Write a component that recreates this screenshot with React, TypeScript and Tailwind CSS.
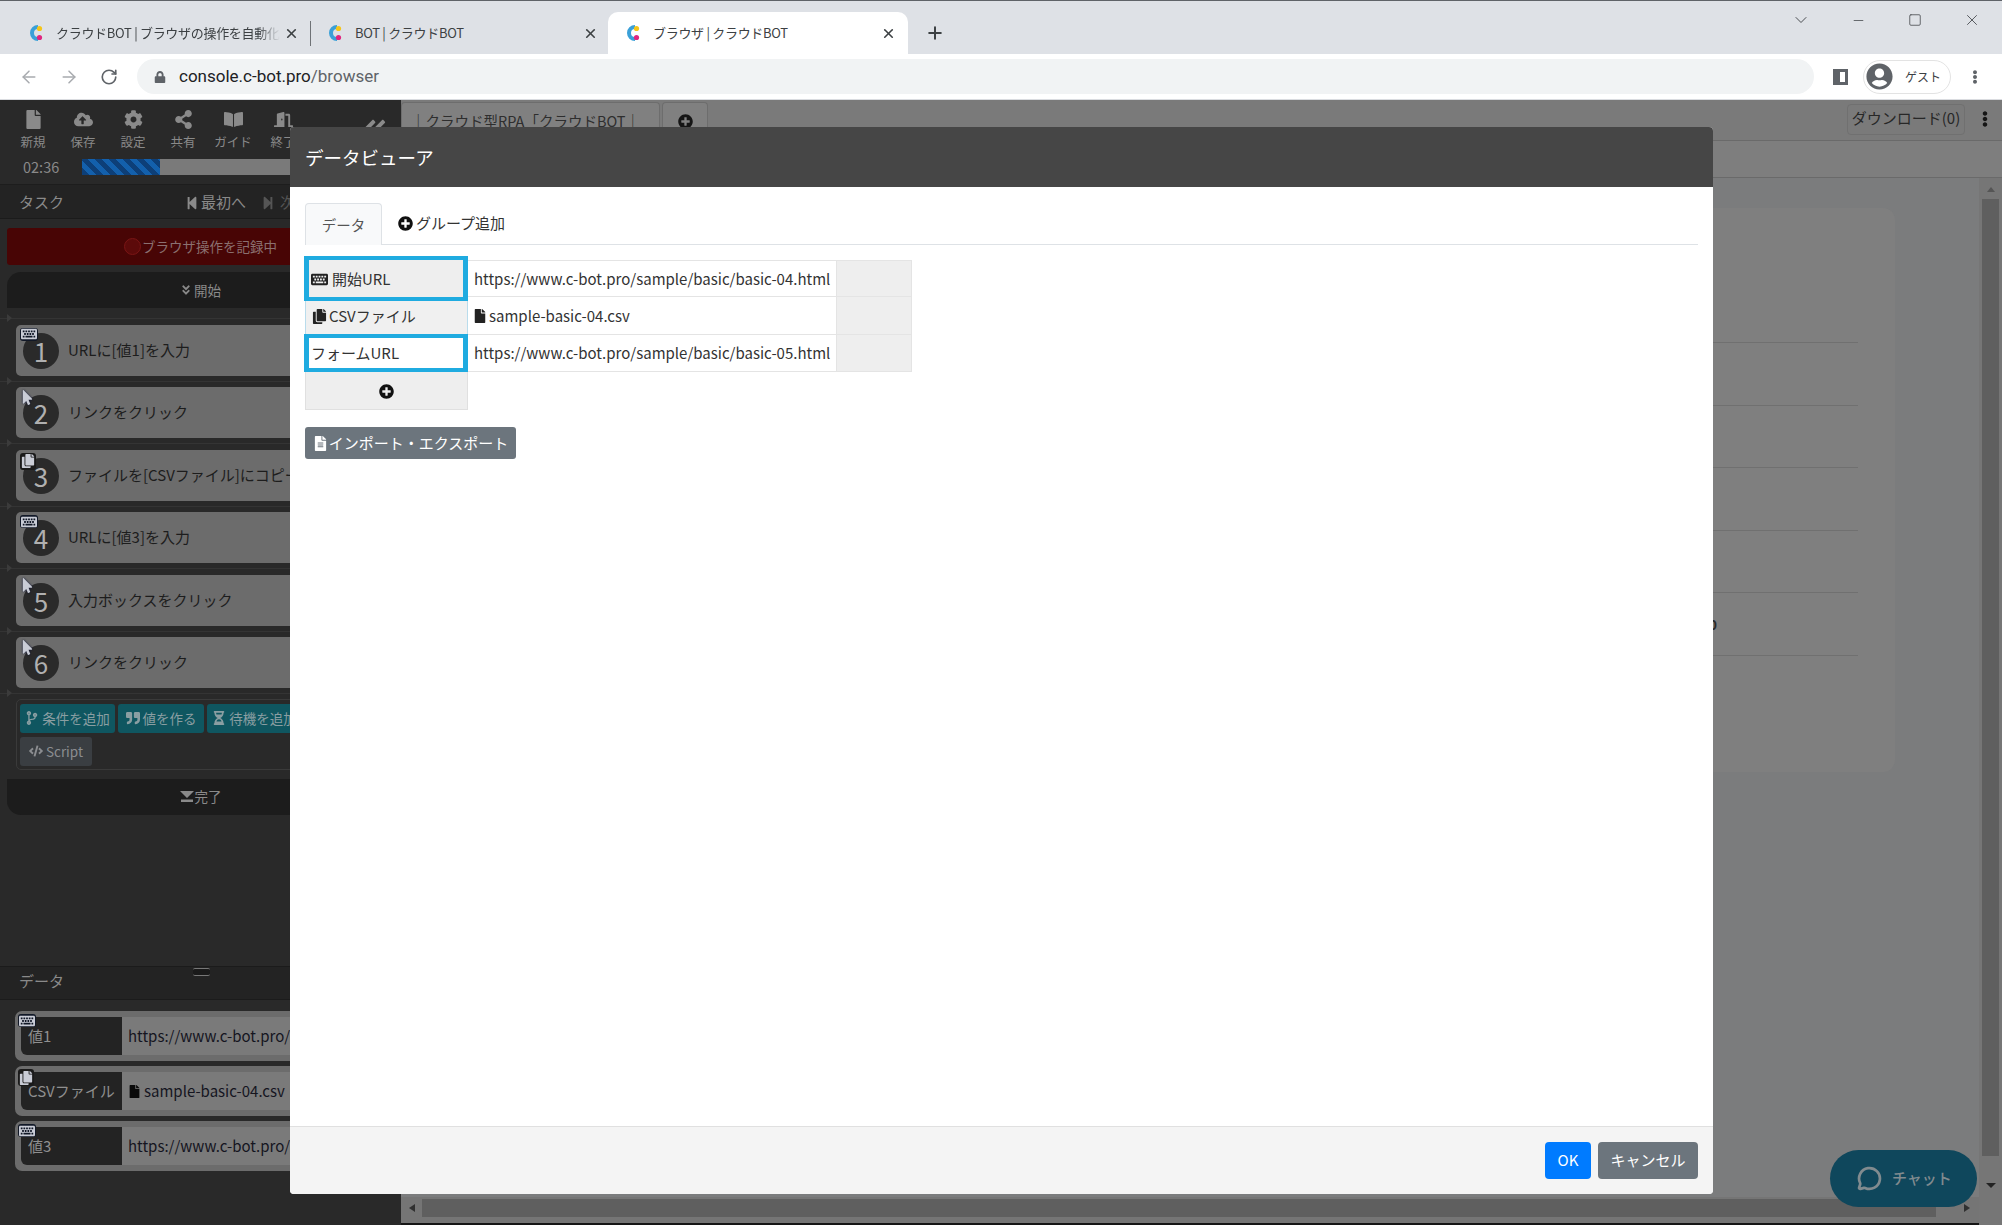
import React from "react";
import {
  FaFile, FaCloudUploadAlt, FaCog, FaShareAlt, FaBookOpen, FaDoorOpen, FaStepBackward, FaStepForward,
  FaAngleDoubleDown, FaAngleDoubleLeft, FaKeyboard, FaMousePointer, FaCopy, FaPlusCircle, FaEllipsisV,
  FaQuoteRight, FaHourglassHalf, FaCode, FaCodeBranch, FaLock, FaUserCircle, FaFileAlt,
} from "react-icons/fa";
import { ArrowLeft, ArrowRight, RotateCw, X, Plus, ChevronDown, Minus, Square, MessageCircle } from "lucide-react";

const FONT = "font-['Noto_Sans_CJK_JP','Noto_Sans',sans-serif]";

function Favicon() {
  return (
    <svg width="14" height="18" viewBox="0 0 14 18" className="shrink-0">
      <path d="M9 1 A8 8 0 0 0 9 17 L9 13 A4 4 0 0 1 9 5 Z" fill="#3aa0d8" />
      <circle cx="10.5" cy="4.5" r="2.6" fill="#f5c518" />
      <circle cx="10.5" cy="13.5" r="2.6" fill="#e0267f" />
    </svg>
  );
}

function ChromeTab({ title, cls, active, fade }: { title: string; cls: string; active?: boolean; fade?: boolean }) {
  return (
    <div className={`${cls} h-[42px] flex items-center shrink-0 relative ${active ? "bg-white rounded-t-[10px]" : ""}`}>
      <Favicon />
      <span className={`ml-[13px] text-[13px] tracking-[-0.3px] text-[#3c4043] whitespace-nowrap overflow-hidden flex-1 ${fade ? "[mask-image:linear-gradient(to_right,black_90%,transparent)]" : ""}`}>{title}</span>
      <X size={15} strokeWidth={2.6} className="text-[#3c4043] shrink-0 ml-1" />
    </div>
  );
}

const toolItems = [
  { icon: FaFile, label: "新規" },
  { icon: FaCloudUploadAlt, label: "保存" },
  { icon: FaCog, label: "設定" },
  { icon: FaShareAlt, label: "共有" },
  { icon: FaBookOpen, label: "ガイド" },
  { icon: FaDoorOpen, label: "終了" },
];

function MiniIcon({ kind, cls }: { kind: string; cls: string }) {
  if (kind === "key")
    return <span className={`absolute ${cls} flex h-[13px] w-[18px] items-center justify-center rounded-[3px] bg-[#111827]`}><FaKeyboard size={16} className="text-[#c9ccd6]" /></span>;
  if (kind === "copy")
    return <span className={`absolute ${cls} flex h-[17px] w-[16px] items-center justify-center rounded-[3px] bg-[#1a1a1a]`}><FaCopy size={14} className="text-[#c9ccd6]" /></span>;
  return <span className={`absolute ${cls}`}><FaMousePointer size={15} className="text-[#c9ccd6] [filter:drop-shadow(0_0_1px_#0b1030)]" /></span>;
}

const steps = [
  { n: 1, t: "URLに[値1]を入力", k: "key" },
  { n: 2, t: "リンクをクリック", k: "mouse" },
  { n: 3, t: "ファイルを[CSVファイル]にコピー", k: "copy" },
  { n: 4, t: "URLに[値3]を入力", k: "key" },
  { n: 5, t: "入力ボックスをクリック", k: "mouse" },
  { n: 6, t: "リンクをクリック", k: "mouse" },
];

function Connector() {
  return (
    <div className="relative h-[11.5px] flex items-center">
      <div className="h-px w-full bg-[#343434]" />
      <div className="absolute left-[7px] top-[1px] h-0 w-0 border-y-[4px] border-l-[5px] border-y-transparent border-l-[#3b3b3b]" />
    </div>
  );
}

function Step({ n, t, k }: { n: number; t: string; k: string }) {
  return (
    <div className="relative ml-[16px] mr-[12px] h-[51px] shrink-0 rounded-[5px] bg-[#6c6c6c] flex items-center">
      <div className="absolute left-[7px] top-[8px] h-[36px] w-[36px] rounded-full bg-[#2a2a2a] flex items-center justify-center text-[26px] text-[#b0b0b0] leading-none">{n}</div>
      <span className="ml-[52px] text-[15px] text-[#1d1d1d] whitespace-nowrap">{t}</span>
      <MiniIcon kind={k} cls="left-[4px] top-[3px]" />
    </div>
  );
}

function SmallButton({ icon: I, label, w, cls }: { icon: any; label: string; w: string; cls: string }) {
  return (
    <div className={`${w} ${cls} h-[29px] rounded-[3px] flex items-center justify-center gap-[3px] text-[13.5px] whitespace-nowrap shrink-0`}>
      <I size={14} />
      <span>{label}</span>
    </div>
  );
}

function DataRow({ label, k, value, file }: { label: string; k: string; value: string; file?: boolean }) {
  return (
    <div className="relative ml-[15px] mr-[12px] h-[50px] rounded-[7px] bg-[#6c6c6c] pl-[6px] pt-[6px] pb-[6px] shrink-0">
      <div className="flex h-[38px] rounded-bl-[6px] overflow-hidden">
        <div className="w-[101px] bg-[#232323] pl-[7px] flex items-center text-[15px] text-[#8f8f8f] whitespace-nowrap">{label}</div>
        <div className="flex-1 bg-[#7a7a7a] pl-[6px] flex items-center gap-[3px] text-[15px] text-[#15151f] whitespace-nowrap overflow-hidden">
          {file && <FaFile size={13} className="text-[#0a0a0a]" />}
          {value}
        </div>
      </div>
      <MiniIcon kind={k} cls="left-[3px] top-[3px]" />
    </div>
  );
}

export default function App() {
  return (
    <div className={`relative w-[2002px] h-[1225px] overflow-hidden bg-[#7b7c7d] flex flex-col ${FONT}`}>
      {/* Tab strip */}
      <div className="h-[54px] shrink-0 bg-[#dee1e6] border-t border-[#5f6368] flex items-end relative">
        <ChromeTab title="クラウドBOT | ブラウザの操作を自動化" cls="w-[310px] pl-[29px] pr-[11px]" fade />
        <div className="w-px h-[25px] bg-[#6f7276] mb-[8px] shrink-0" />
        <ChromeTab title="BOT | クラウドBOT" cls="w-[297px] pl-[17px] pr-[10px]" />
        <ChromeTab title="ブラウザ | クラウドBOT" cls="w-[300px] pl-[18px] pr-[12px]" active />
        <Plus size={20} strokeWidth={2.4} className="ml-[17px] mb-[11px] text-[#3c4043]" />
        <div className="ml-auto flex items-center self-start mt-[9px] text-[#4a4d51]">
          <ChevronDown size={20} strokeWidth={1.2} className="mr-[40px]" />
          <Minus size={15} strokeWidth={1.3} className="mr-[42px]" />
          <Square size={14} strokeWidth={1.4} className="mr-[41px]" />
          <X size={18} strokeWidth={1.2} className="mr-[21px]" />
        </div>
      </div>

      {/* Address bar */}
      <div className="h-[46px] shrink-0 bg-white border-b border-[#dadce0] flex items-center pl-[19px] text-[#5f6368]">
        <ArrowLeft size={20} strokeWidth={1.8} className="text-[#a8abaf]" />
        <ArrowRight size={20} strokeWidth={1.8} className="ml-[20px] text-[#a8abaf]" />
        <RotateCw size={18} strokeWidth={2.2} className="ml-[21px]" />
        <div className="ml-[19px] h-[35px] w-[1677px] rounded-full bg-[#f1f3f4] flex items-center pl-[17px]">
          <FaLock size={12} className="text-[#5f6368]" />
          <span className="ml-[13px] pt-[1px] text-[17px] font-['Roboto',sans-serif] text-[#202124]">console.c-bot.pro<span className="text-[#5f6368]">/browser</span></span>
        </div>
        <div className="ml-[19px] h-[16px] w-[15px] border-[3px] border-l-[7px] border-[#5f6368]" />
        <div className="ml-[15px] h-[34px] w-[88px] rounded-full border border-[#e3e3e3] flex items-center pl-[2px]">
          <FaUserCircle size={27} className="text-[#5f6368]" />
          <span className="ml-[12px] text-[12px] text-[#3c4043]">ゲスト</span>
        </div>
        <FaEllipsisV size={14} className="ml-[17px] text-[#5f6368]" />
      </div>

      {/* App */}
      <div className="flex-1 flex min-h-0">
        {/* Sidebar */}
        <div className="w-[401px] shrink-0 bg-[#292929] flex flex-col overflow-hidden">
          <div className="h-[85px] shrink-0 border-b border-[#1d1d1d] relative pl-[8px] pt-[10px]">
            <div className="flex">
              {toolItems.map((it) => (
                <div key={it.label} className="w-[50px] flex flex-col items-center text-[#8a8a8a] shrink-0">
                  <it.icon size={19} />
                  <span className="text-[12.5px] leading-[15px] mt-[5px] whitespace-nowrap">{it.label}</span>
                </div>
              ))}
            </div>
            <FaAngleDoubleLeft size={26} className="absolute left-[362px] top-[15px] text-[#8a8a8a]" />
            <div className="flex items-center mt-[7px] pl-[15px]">
              <span className="text-[14.5px] text-[#8a8a8a] w-[59px]">02:36</span>
              <div className="w-[310px] h-[16px] bg-[#7a7a7a] overflow-hidden">
                <div className="h-full w-[78px] bg-[repeating-linear-gradient(45deg,#0d3f78_0,#0d3f78_5px,#1360ac_5px,#1360ac_10px)]" />
              </div>
            </div>
          </div>
          <div className="h-[34px] shrink-0 bg-[#232323] border-b border-[#1b1b1b] flex items-center pl-[19px] pt-[2px] text-[#8a8a8a] text-[15px]">
            <span className="w-[166px]">タスク</span>
            <FaStepBackward size={14} />
            <span className="ml-[2px] w-[60px]">最初へ</span>
            <FaStepForward size={14} className="text-[#555]" />
            <span className="ml-[5px] text-[#555]">次へ</span>
          </div>
          <div className="mx-[7px] mt-[9px] h-[37px] shrink-0 rounded-[3px] bg-[#480505] flex items-center justify-center gap-[1px] pb-[1px] text-[13.5px] text-[#8b7070]">
            <span className="h-[17px] w-[17px] rounded-full border border-[#7a1515] bg-[#5c0a0a]" />
            ブラウザ操作を記録中
          </div>
          <div className="mx-[7px] mt-[7px] h-[36px] shrink-0 rounded-t-[14px] bg-[#1c1c1c] flex items-center justify-center gap-[2px] text-[13.5px] text-[#8a8a8a]">
            <FaAngleDoubleDown size={12} />
            開始
          </div>
          <div className="mt-[5px] flex flex-col">
            {steps.map((s) => (
              <React.Fragment key={s.n}>
                <Connector />
                <Step {...s} />
              </React.Fragment>
            ))}
            <Connector />
          </div>
          <div className="-mt-[1px] ml-[16px] mr-[12px] h-[71px] shrink-0 rounded-[5px] border border-[#3a3a3a] pl-[3px] pt-[4px]">
            <div className="flex gap-[3px]">
              <SmallButton icon={FaCodeBranch} label="条件を追加" w="w-[95px]" cls="bg-[#0f5660] text-[#8a9ea2]" />
              <SmallButton icon={FaQuoteRight} label="値を作る" w="w-[86px]" cls="bg-[#0f5660] text-[#8a9ea2]" />
              <SmallButton icon={FaHourglassHalf} label="待機を追加" w="w-[95px]" cls="bg-[#0f5660] text-[#8a9ea2]" />
            </div>
            <SmallButton icon={FaCode} label="Script" w="w-[72px] mt-[4px]" cls="bg-[#3a3e42] text-[#8b8d90]" />
          </div>
          <div className="mx-[7px] mt-[9px] h-[36px] shrink-0 rounded-b-[14px] bg-[#1c1c1c] flex items-center justify-center gap-[1px] text-[13.5px] text-[#8a8a8a]">
            <svg width="14" height="11" viewBox="0 0 14 11"><path d="M0 0H14L7 7ZM1 8.5H13V11H1Z" fill="#8a8a8a" /></svg>
            完了
          </div>
          <div className="flex-1 min-h-0" />
          <div className="relative h-[34px] shrink-0 border-y border-[#1b1b1b] bg-[#232323] flex items-center pl-[19px] pb-[3px] text-[15px] text-[#8a8a8a]">
            データ
            <div className="absolute left-[193px] top-[1px] h-[8px] w-[17px] rounded-[2px] border-y border-[#777] bg-[#1a1a1a]" />
          </div>
          <div className="mt-[11px] mb-[54px] flex flex-col gap-[5px]">
            <DataRow label="値1" k="key" value="https://www.c-bot.pro/sample/basic/basic-04.html" />
            <DataRow label="CSVファイル" k="copy" value="sample-basic-04.csv" file />
            <DataRow label="値3" k="key" value="https://www.c-bot.pro/sample/basic/basic-05.html" />
          </div>
        </div>

        {/* Main */}
        <div className="flex-1 min-w-0 flex flex-col">
          <div className="h-[41px] shrink-0 bg-[#7a7a7a] border-b border-[#6a6a6a] flex items-start pt-[2px] relative">
            <div className="w-[259px] h-[38px] rounded-t-[4px] border border-b-0 border-[#6d6d6d] bg-[#808080] pl-[9px] pt-[7px] text-[14.5px] text-[#2e2e2e] whitespace-nowrap overflow-hidden">｜クラウド型RPA「クラウドBOT｜</div>
            <div className="ml-[2px] w-[46px] h-[38px] rounded-t-[4px] border border-b-0 border-[#6d6d6d] bg-[#808080] flex justify-center pt-[11px]"><FaPlusCircle size={15} className="text-[#151515]" /></div>
            <div className="ml-auto mr-[37px] mt-[2px] h-[31px] w-[118px] rounded-[4px] border border-[#707070] flex items-center justify-center pb-[2px] text-[15px] text-[#272727] whitespace-nowrap">ダウンロード(0)</div>
            <FaEllipsisV size={16} className="absolute right-[9px] top-[11px] text-[#151515]" />
          </div>
          <div className="h-[37px] shrink-0 bg-[#7e7e7e] border-b border-[#6a6a6a]" />
          <div className="flex-1 min-h-0 flex">
            <div className="flex-1 min-w-0 flex flex-col">
              <div className="flex-1 min-h-0 pt-[30px] pr-[84px] pl-[100px]">
                <div className="h-[564px] rounded-[12px] bg-[#7f7f7f] pt-[134px] pr-[37px] flex flex-col">
                  {[0, 1, 2, 3, 4, 5].map((i) => (
                    <div key={i} className={`${i === 0 ? "h-px" : "h-[62.6px]"} border-b border-[#707070] flex items-center justify-end pr-[141px] text-[14px] font-bold text-[#2a2a2a]`}>{i === 5 ? "0" : ""}</div>
                  ))}
                </div>
              </div>
              <div className="h-[28px] shrink-0 border-b-2 border-[#161616] flex items-start pt-[2px] bg-[#757575]">
                <div className="ml-[8px] mt-[5px] h-0 w-0 border-y-[4px] border-r-[6px] border-y-transparent border-r-[#303030]" />
                <div className="ml-[7px] h-[18px] w-[1514px] bg-[#5f5f5f]" />
                <div className="ml-[28px] mt-[5px] h-0 w-0 border-y-[4px] border-l-[6px] border-y-transparent border-l-[#303030]" />
              </div>
            </div>
            <div className="w-[23px] shrink-0 bg-[#767676] flex flex-col items-center pt-[9px] pb-[37px]">
              <div className="h-0 w-0 border-x-[4px] border-b-[5px] border-x-transparent border-b-[#555]" />
              <div className="mt-[7px] flex-1 w-[17px] bg-[#5f5f5f]" />
              <div className="mt-[27px] h-0 w-0 border-x-[5px] border-t-[5px] border-x-transparent border-t-[#222]" />
            </div>
          </div>
        </div>
      </div>

      {/* Chat bubble */}
      <div className="absolute left-[1830px] top-[1150px] h-[57px] w-[147px] rounded-full bg-[#0f475c] flex items-center pl-[27px] text-[#818b8f]">
        <MessageCircle size={25} strokeWidth={2.6} />
        <span className="ml-[10px] text-[15px] font-medium whitespace-nowrap">チャット</span>
      </div>

      {/* Modal */}
      <div className="absolute left-[290px] top-[127px] w-[1423px] h-[1067px] rounded-[4px] bg-white overflow-hidden flex flex-col">
        <div className="h-[60px] shrink-0 bg-[#464646] flex items-center pl-[15px] pt-[1px] text-[18.5px] text-white">データビューア</div>
        <div className="flex-1 px-[15px] pt-[16px]">
          <div className="flex h-[42px] border-b border-[#dee2e6] items-end">
            <div className="w-[77px] h-[42px] -mb-px rounded-t-[4px] border border-[#dee2e6] border-b-0 bg-[#f8f9fa] flex items-center justify-center text-[14.5px] text-[#555]">データ</div>
            <div className="ml-[16px] h-[41px] flex items-center gap-[3px] text-[15px] text-[#333]">
              <FaPlusCircle size={15} className="text-[#111]" />
              グループ追加
            </div>
          </div>
          <div className="mt-[15px] grid grid-cols-[163px_369px_75px] grid-rows-[37px_38px_37px_38px] w-[607px] text-[15px] text-[#333]">
            <div className="relative z-10 -mt-[4px] -mb-[4px] -ml-px bg-[#eeeeee] border-x-[5px] border-y-[4px] border-[#1fabe0] flex items-center gap-[4px] pl-[2px] pt-[1px] whitespace-nowrap">
              <FaKeyboard size={17} className="text-[#222]" />
              開始URL
            </div>
            <div className="border border-l-0 border-[#e4e4e4] flex items-center pl-[6px] pt-[1px] whitespace-nowrap">https://www.c-bot.pro/sample/basic/basic-04.html</div>
            <div className="border border-l-0 border-[#e4e4e4] bg-[#eeeeee]" />

            <div className="bg-[#f0f0f0] border-x border-[#b9dcec] flex items-center gap-[2px] pl-[6px] whitespace-nowrap">
              <FaCopy size={15} className="text-[#222]" />
              CSVファイル
            </div>
            <div className="border-b border-r border-[#e4e4e4] flex items-center gap-[2px] pl-[5px] pt-[1px] whitespace-nowrap">
              <FaFile size={14} className="text-[#222]" />
              sample-basic-04.csv
            </div>
            <div className="border-b border-r border-[#e4e4e4] bg-[#eeeeee]" />

            <div className="relative z-10 -mt-[1px] -ml-px bg-white border-x-[5px] border-y-[4px] border-[#1fabe0] flex items-center pl-[2px] pt-[1px] whitespace-nowrap">フォームURL</div>
            <div className="border-b border-r border-[#e4e4e4] flex items-center pl-[6px] pt-[1px] whitespace-nowrap">https://www.c-bot.pro/sample/basic/basic-05.html</div>
            <div className="border-b border-r border-[#e4e4e4] bg-[#eeeeee]" />

            <div className="border border-t-0 border-[#e0e0e0] bg-[#eeeeee] flex items-center justify-center pt-[1px]"><FaPlusCircle size={15} className="text-[#111]" /></div>
          </div>
          <div className="mt-[17px] w-[211px] h-[32px] rounded-[3px] bg-[#6c757d] flex items-center justify-center gap-[1px] text-[15px] text-white">
            <FaFileAlt size={15} className="text-white" />
            インポート・エクスポート
          </div>
        </div>
        <div className="h-[68px] shrink-0 bg-[#f4f4f4] border-t border-[#e0e0e0] flex items-center justify-end gap-[7px] pr-[15px] text-[15px] text-white">
          <div className="w-[46px] h-[37px] rounded-[4px] bg-[#007bff] flex items-center justify-center">OK</div>
          <div className="w-[100px] h-[37px] rounded-[4px] bg-[#6c757d] flex items-center justify-center pb-[1px]">キャンセル</div>
        </div>
      </div>
    </div>
  );
}
